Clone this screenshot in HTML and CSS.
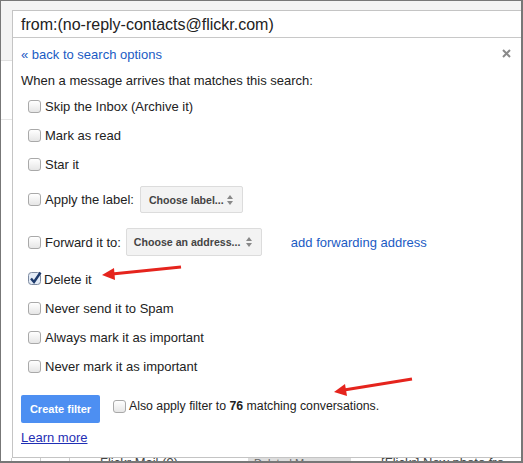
FILE: index.html
```html
<!DOCTYPE html>
<html lang="en">
<head>
  <meta charset="UTF-8">
  <title>Create filter</title>
  <link rel="stylesheet" href="styles.css">
</head>
<body>
  <div class="frame">
    <div class="top-gap"></div>

    <div class="main">
      <div class="side">
        <div class="side-top"></div>
        <div class="side-mid"></div>
      </div>

      <div class="dialog">
        <div class="searchbox">from:(no-reply-contacts@flickr.com)</div>

        <div class="panel">
          <div class="panel-head">
            <a class="link" href="#">« back to search options</a>
            <svg class="close" width="9" height="9" viewBox="0 0 9 9">
              <path d="M1 1 L8 8 M8 1 L1 8" stroke="#8a8a8a" stroke-width="2"/>
            </svg>
          </div>

          <div class="intro">When a message arrives that matches this search:</div>

          <div class="row"><span class="cb"></span>Skip the Inbox (Archive it)</div>
          <div class="row"><span class="cb"></span>Mark as read</div>
          <div class="row"><span class="cb"></span>Star it</div>
          <div class="row row-label">
            <span class="cb"></span>Apply the label:
            <span class="select sel-label">Choose label...<span class="updown"></span></span>
          </div>
          <div class="row row-forward">
            <span class="cb"></span>Forward it to:
            <span class="select sel-address">Choose an address...<span class="updown"></span></span>
            <a class="link fwd" href="#">add forwarding address</a>
          </div>
          <div class="row row-tall">
            <svg class="cb-checked" width="14" height="14" viewBox="0 0 14 14">
              <rect x="0.5" y="1.5" width="12" height="12" rx="3" fill="#e3ebf6" stroke="#7d8aa0"/>
              <path d="M3 7.5 L6 11 L12.5 1.5" fill="none" stroke="#1d3a6c" stroke-width="2.4"/>
            </svg>Delete it
          </div>
          <div class="row"><span class="cb"></span>Never send it to Spam</div>
          <div class="row"><span class="cb"></span>Always mark it as important</div>
          <div class="row"><span class="cb"></span>Never mark it as important</div>

          <div class="actions">
            <button class="btn-create">Create filter</button>
            <span class="cb"></span>
            <span class="apply-text">Also apply filter to <b>76</b> matching conversations.</span>
          </div>

          <a class="learn" href="#">Learn more</a>
        </div>
      </div>
    </div>

    <div class="bottom-strip">
      <span class="bs-cell w1"></span>
      <span class="bs-cell w2"></span>
      <span class="bs-text">Flickr Mail (9)</span>
      <span class="bs-tag">Deleted Messages</span>
      <span class="bs-text">[Flickr] New photo fro</span>
    </div>

    <!-- red annotation arrows -->
    <svg class="arrows" width="523" height="463" viewBox="0 0 523 463">
      <path d="M181 267 L112 274" stroke="#e5241d" stroke-width="3"/>
      <path d="M102 275 L114 268 L115 280 Z" fill="#e5241d"/>
      <path d="M412 379 L344 390" stroke="#e5241d" stroke-width="3"/>
      <path d="M334 392 L345 384 L347 396 Z" fill="#e5241d"/>
    </svg>
  </div>
</body>
</html>
```

FILE: styles.css
```css
body {
  margin: 0;
  background: #fff;
  font-family: "Liberation Sans", Arial, sans-serif;
  color: #222;
}
.frame {
  position: relative;
  width: 523px;
  height: 463px;
  box-sizing: border-box;
  border: 1px solid #777;
  border-right-width: 2px;
  border-bottom-width: 2px;
  overflow: hidden;
  display: flex;
  flex-direction: column;
  background: #fff;
}
.top-gap {
  height: 9px;
  background: #f3f3f3;
  flex: none;
}
.main {
  display: flex;
  flex: none;
  height: 448px;
}
.side {
  width: 11px;
  flex: none;
}
.side-top {
  height: 50px;
  background: #f3f3f3;
  border-bottom: 1px solid #e0e0e0;
}
.side-mid {
  height: 58px;
  border-bottom: 1px solid #e6e6e6;
}
.dialog {
  flex: 1;
  border: 1px solid #c4c4c4;
  border-right: none;
  background: #fff;
  display: flex;
  flex-direction: column;
}
.searchbox {
  height: 26px;
  line-height: 27px;
  padding-left: 8px;
  font-size: 16px;
  color: #222;
  border-bottom: 1px solid #c8c8c8;
}
.panel {
  padding: 8px 10px 0 8px;
  font-size: 13px;
}
.panel-head {
  display: flex;
  justify-content: space-between;
  align-items: center;
  height: 16px;
}
.link {
  color: #1a5bc4;
  text-decoration: none;
}
.close {
  margin-top: -1px;
}
.intro {
  margin-top: 11px;
  line-height: 16px;
  margin-bottom: 3px;
}
.row {
  display: flex;
  align-items: center;
  height: 29px;
  padding-left: 7px;
  white-space: nowrap;
}
.row-label {
  height: 41px;
}
.row-forward {
  height: 44px;
}
.row-tall {
  height: 30px;
}
.cb {
  width: 11px;
  height: 11px;
  border: 1px solid #a9a9a9;
  border-radius: 3px;
  background: linear-gradient(#ffffff, #e6e6e6);
  margin-right: 4px;
  flex: none;
}
.cb-checked {
  margin-right: 2px;
  margin-top: -2px;
  flex: none;
}
.select {
  display: inline-flex;
  align-items: center;
  justify-content: space-between;
  box-sizing: border-box;
  height: 27px;
  padding: 0 8px 0 8px;
  margin-left: 6px;
  background: #f3f3f3;
  border: 1px solid #dcdcdc;
  border-radius: 2px;
  font-size: 10.6px;
  font-weight: bold;
  color: #444;
  white-space: nowrap;
  flex: none;
}
.sel-label {
  width: 103px;
}
.sel-address {
  width: 136px;
  height: 28px;
  margin-left: 5px;
  padding-left: 7px;
}
.updown {
  position: relative;
  width: 7px;
  height: 10px;
  flex: none;
}
.updown::before,
.updown::after {
  content: "";
  position: absolute;
  left: 0;
  border-left: 3.5px solid transparent;
  border-right: 3.5px solid transparent;
}
.updown::before {
  top: 0;
  border-bottom: 4px solid #888;
}
.updown::after {
  bottom: 0;
  border-top: 4px solid #888;
}
.fwd {
  margin-left: 29px;
}
.actions {
  display: flex;
  align-items: center;
  margin-top: 14px;
  height: 28px;
  white-space: nowrap;
}
.actions .cb {
  margin-left: 13px;
  margin-top: -6px;
  margin-right: 3px;
}
.apply-text {
  margin-top: -6px;
  font-size: 12.3px;
}
.btn-create {
  width: 79px;
  height: 28px;
  border: none;
  border-radius: 2px;
  background: #4d8ff2;
  color: #fff;
  font-family: inherit;
  font-size: 11px;
  font-weight: bold;
  padding: 0;
}
.learn {
  display: block;
  margin-top: 7px;
  line-height: 16px;
  color: #1f2fb4;
  text-decoration: underline;
  width: max-content;
}
.bottom-strip {
  flex: 1;
  display: flex;
  align-items: flex-start;
  overflow: hidden;
  font-size: 13px;
  line-height: 8px;
  color: #444;
  background: #fff;
  white-space: nowrap;
}
.bs-cell {
  height: 6px;
  border-right: 1px solid #ccc;
  flex: none;
}
.bs-cell.w1 {
  width: 28px;
  margin-left: 10px;
  border-left: 1px solid #ccc;
}
.bs-cell.w2 {
  width: 28px;
}
.bs-text {
  margin-left: 30px;
  padding-top: 1px;
}
.bs-tag {
  margin-left: 70px;
  padding: 1px 6px 0;
  background: #ddd;
  color: #666;
  font-size: 11px;
}
.arrows {
  position: absolute;
  left: -1px;
  top: -1px;
  pointer-events: none;
}
```
